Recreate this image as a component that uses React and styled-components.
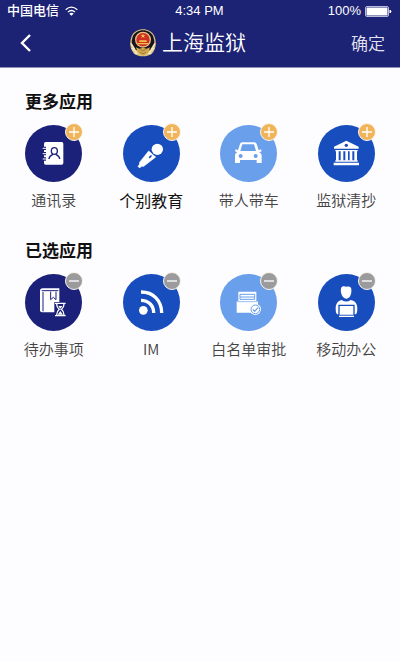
import React from "react";
import styled, { createGlobalStyle } from "styled-components";

const GlobalStyle = createGlobalStyle`
  * {
    box-sizing: border-box;
  }
  body {
    margin: 0;
    background: #fdfcfe;
    font-family: "Liberation Sans", "Noto Sans CJK SC", sans-serif;
  }
  button {
    border: 0;
    padding: 0;
    background: none;
    font-family: inherit;
    cursor: pointer;
  }
`;

const Header = styled.header`
  height: 68px;
  background: #1c2274;
  color: #fff;
  border-bottom: 1px solid #8f90b8;
`;
const StatusBar = styled.div`
  display: grid;
  grid-template-columns: 1fr auto 1fr;
  align-items: center;
  height: 22px;
  padding: 0 8px 0 7px;
  font-size: 13px;
  line-height: 22px;
`;
const Carrier = styled.div`
  display: flex;
  align-items: center;
  gap: 6px;
  font-weight: 500;
`;
const Battery = styled.div`
  display: flex;
  align-items: center;
  justify-content: flex-end;
  gap: 4px;
`;
const NavBar = styled.nav`
  display: grid;
  grid-template-columns: 1fr auto 1fr;
  align-items: center;
  height: 42px;
  padding: 0 15px 0 16px;
`;
const BackButton = styled.button`
  display: flex;
  justify-self: start;
  color: #fff;
`;
const Brand = styled.div`
  display: flex;
  align-items: center;
  gap: 6px;
  margin-right: 25px;
`;
const Title = styled.h1`
  margin: 0;
  font-size: 21px;
  line-height: 30px;
  font-weight: 350;
`;
const ConfirmButton = styled.button`
  justify-self: end;
  padding-top: 3px;
  color: #e4e4f0;
  font-size: 17px;
  line-height: 24px;
  font-weight: 350;
`;

const Main = styled.main`
  display: flex;
  flex-direction: column;
  gap: 29px;
  padding: 23px 5px;
`;
const Heading = styled.h2`
  margin: 0 0 10px;
  padding-left: 20px;
  color: #111;
  font-size: 17px;
  line-height: 24px;
  font-weight: 700;
`;
const AppGrid = styled.div`
  display: grid;
  grid-template-columns: repeat(4, 1fr);
`;
const AppButton = styled.button`
  display: flex;
  flex-direction: column;
  align-items: center;
  gap: 7px;
  white-space: nowrap;
`;
const Disc = styled.span`
  position: relative;
  width: 57px;
  height: 57px;
  border-radius: 50%;
  background: ${(p) => p.$color};
`;
const Badge = styled.span`
  position: absolute;
  top: -2px;
  right: -1px;
  display: flex;
  width: 18px;
  height: 18px;
  border: 1px solid #fdf6ec;
  border-radius: 50%;
  background: ${(p) => (p.$add ? "#f0b45a" : "#9b9b9d")};
`;
const Label = styled.span`
  color: ${(p) => (p.$strong ? "#111" : "#444")};
  font-family: "Noto Sans CJK SC", sans-serif;
  font-size: ${(p) => (p.$strong ? "16px" : "15px")};
  line-height: 22px;
  font-weight: ${(p) => (p.$strong ? 400 : 350)};
`;

const NAVY = "#1b2078";
const BLUE = "#174dbd";
const SKY = "#6a9fec";

const ContactsIcon = () => (
  <>
    <rect x="57" y="51" width="58" height="68" rx="5" fill="#fff" />
    <path d="M52 70h11M52 86h11M52 102h11" stroke={NAVY} strokeWidth="10" />
    <path d="M53 70h10M53 86h10M53 102h10" stroke="#fff" strokeWidth="3" />
    <ellipse cx="88" cy="78" rx="9" ry="10" fill="none" stroke={NAVY} strokeWidth="4" />
    <path d="M72 102c0-9 6-11 12-14M104 102c0-9-6-11-12-14" fill="none" stroke={NAVY} strokeWidth="4" />
  </>
);

const MicIcon = () => (
  <>
    <path d="M77 78L98 96L62 124L55 124L50 129L45 124L49 119L50 112z" fill="#fff" strokeLinejoin="round" stroke="#fff" strokeWidth="2" />
    <circle cx="103" cy="73" r="20" fill={BLUE} />
    <circle cx="103" cy="73" r="17" fill="#fff" />
    <path d="M80 97l4-4" stroke={BLUE} strokeWidth="5" strokeLinecap="round" />
  </>
);

const CarIcon = () => (
  <>
    <path
      d="M66 52h37q5 0 7 5l6 19 7-3 2 6-7 3q7 3 7 9v23h-15v-9H60v9H45V91q0-6 7-9l-7-3 2-6 7 3 6-19q2-5 6-5z"
      fill="#fff"
    />
    <path d="M67 58h35l6 20H61z" fill={SKY} />
    <circle cx="62" cy="93" r="6" fill={SKY} />
    <circle cx="107" cy="93" r="6" fill={SKY} />
  </>
);

const BankIcon = () => (
  <>
    <path d="M85 47l37 18v6H48v-6z" fill="#fff" />
    <circle cx="85" cy="61" r="5" fill={BLUE} />
    <path d="M52 75h67v4H52zM52 106h67v4H52zM47 113h76v8H47z" fill="#fff" />
    <path d="M58 78v29M72 78v29M86 78v29M99 78v29M113 78v29" stroke="#fff" strokeWidth="8" />
  </>
);

const TodoIcon = () => (
  <>
    <path d="M53 43h50v72H51q-6 0-6-6V51q0-8 8-8z" fill="#fff" />
    <path d="M50 50h50M54 54v58" stroke={NAVY} strokeWidth="3" />
    <path d="M77 53v24l8-7 8 7V53" fill="none" stroke={NAVY} strokeWidth="3" />
    <path d="M88 84h36v44H88z" fill={NAVY} />
    <path d="M90 88h32M90 125h32" stroke="#fff" strokeWidth="4" />
    <path
      d="M95 90c0 10 3 12 8 16-5 4-8 7-8 17M117 90c0 10-3 12-8 16 5 4 8 7 8 17"
      fill="none"
      stroke="#fff"
      strokeWidth="4"
    />
    <path d="M100 96h12l-6 8zM106 111l8 11H98z" fill="#fff" />
  </>
);

const FeedIcon = () => (
  <>
    <circle cx="61" cy="109" r="13" fill="#fff" />
    <path d="M54 79c22 0 38 15 38 38M54 54c37 0 62 26 62 63" fill="none" stroke="#fff" strokeWidth="10" />
  </>
);

const ApproveIcon = () => (
  <>
    <path d="M55 53h54v29h5v34H50V82h5z" fill="#fff" />
    <path d="M60 61h44v15H60zM60 69h44" fill="none" stroke={SKY} strokeWidth="3" />
    <path d="M52 83h61" stroke={SKY} strokeWidth="2" />
    <circle cx="106" cy="106" r="17" fill="#fff" />
    <circle cx="106" cy="106" r="13" fill="#fff" stroke={SKY} strokeWidth="3" />
    <path d="M99 106l5 6 10-11" fill="none" stroke={SKY} strokeWidth="4" />
  </>
);

const OfficeIcon = () => (
  <>
    <path
      d="M69 43c3-8 9-7 16-5 8-2 15-1 15 8 1 10-1 17-5 23q-10 11-20 0c-5-6-8-16-6-26z"
      fill="#fff"
    />
    <path d="M71 78q14 9 27 0c15 3 20 12 20 26 0 10-2 17-6 17H59c-4 0-6-7-6-17 0-14 5-23 18-26z" fill="#fff" />
    <path d="M63 94h45v30H63z" fill="#fff" stroke={BLUE} strokeWidth="4" />
    <path d="M63 127h45" stroke="#fff" strokeWidth="4" />
  </>
);

const moreApps = [
  { name: "通讯录", color: NAVY, Icon: ContactsIcon },
  { name: "个别教育", color: BLUE, Icon: MicIcon, strong: true },
  { name: "带人带车", color: SKY, Icon: CarIcon },
  { name: "监狱清抄", color: BLUE, Icon: BankIcon },
];
const selectedApps = [
  { name: "待办事项", color: NAVY, Icon: TodoIcon },
  { name: "IM", color: BLUE, Icon: FeedIcon },
  { name: "白名单审批", color: SKY, Icon: ApproveIcon },
  { name: "移动办公", color: BLUE, Icon: OfficeIcon },
];

const Emblem = () => (
  <svg width="26" height="28" viewBox="0 0 78 84" aria-hidden="true">
    <path d="M39 1c14 0 28 7 34 20 6 15 6 32-2 46-5 10-17 15-32 15S12 77 7 67C-1 53-1 36 5 21 11 8 25 1 39 1z" fill="#d9c183" />
    <path d="M39 4c14 0 26 8 31 19 5 14 4 27-3 37L39 71 11 60C4 50 3 37 8 23 13 12 25 4 39 4z" fill="#17131c" />
    <path
      d="M3 43l12 20M6 57l14 13M75 43L63 63M72 57L58 70M14 73l16-2M64 73l-16-2"
      stroke="#f4e6b8"
      strokeWidth="5"
    />
    <path d="M18 55l10 4 11-3 11 3 10-4-5 17-16 8-16-8z" fill="#d0a850" />
    <circle cx="39" cy="32" r="24" fill="#e6bd83" />
    <circle cx="39" cy="32" r="20" fill="#cd2f22" />
    <path d="M39 14l2 5h5l-4 3 2 5-5-3-5 3 2-5-4-3h5zM28 34h22v5H28zM24 42h30v4H24z" fill="#f2c14c" />
    <path d="M29 61l10 4 10-4M30 70l9 4 9-4" fill="none" stroke="#a67c35" strokeWidth="3" />
  </svg>
);

const AppSection = ({ title, apps, add }) => (
  <section>
    <Heading>{title}</Heading>
    <AppGrid>
      {apps.map(({ name, color, Icon, strong }) => (
        <AppButton key={name} type="button">
          <Disc $color={color}>
            <svg width="57" height="57" viewBox="0 0 171 171" aria-hidden="true">
              <Icon />
            </svg>
            <Badge $add={add}>
              <svg width="16" height="16" viewBox="0 0 16 16" aria-hidden="true">
                <path d={add ? "M3 8h10M8 3v10" : "M3 8h10"} stroke="#fff" strokeWidth="1.3" />
              </svg>
            </Badge>
          </Disc>
          <Label $strong={strong}>{name}</Label>
        </AppButton>
      ))}
    </AppGrid>
  </section>
);

const App = () => {
  return (
    <>
      <GlobalStyle />
      <Header>
        <StatusBar>
          <Carrier>
            中国电信
            <svg width="13" height="10" viewBox="0 0 39 30" aria-hidden="true">
              <path d="M2 11q17-15 35 0M9 18q10-9 21 0" fill="none" stroke="#fff" strokeWidth="4" />
              <path d="M13 23q6-5 13 0l-7 6z" fill="#fff" />
            </svg>
          </Carrier>
          <span>4:34 PM</span>
          <Battery>
            100%
            <svg width="27" height="11" viewBox="0 0 27 11" aria-hidden="true">
              <rect x="0.5" y="0.5" width="23" height="10" rx="1.5" fill="none" stroke="#b9bbdc" />
              <rect x="1.5" y="1.5" width="21" height="8" rx="0.5" fill="#fff" />
              <path d="M25 4q2 1.5 0 3z" fill="#fff" stroke="#fff" />
            </svg>
          </Battery>
        </StatusBar>
        <NavBar>
          <BackButton type="button" aria-label="返回">
            <svg width="18" height="20" viewBox="0 0 18 20" aria-hidden="true">
              <path d="M14 2L6 10l8 8" fill="none" stroke="currentColor" strokeWidth="2.4" />
            </svg>
          </BackButton>
          <Brand>
            <Emblem />
            <Title>上海监狱</Title>
          </Brand>
          <ConfirmButton type="button">确定</ConfirmButton>
        </NavBar>
      </Header>
      <Main>
        <AppSection title="更多应用" apps={moreApps} add />
        <AppSection title="已选应用" apps={selectedApps} />
      </Main>
    </>
  );
};

export default App;
